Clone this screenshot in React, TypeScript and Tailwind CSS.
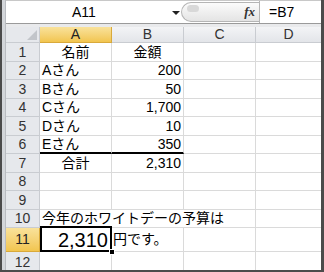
import React from "react";

type Row = {
  n: number;
  h: number;
  a?: string;
  aAlign?: "left" | "center" | "right";
  b?: string;
  bAlign?: "left" | "center" | "right";
};

const rows: Row[] = [
  { n: 1, h: 19, a: "名前", aAlign: "center", b: "金額", bAlign: "center" },
  { n: 2, h: 18, a: "Aさん", b: "200", bAlign: "right" },
  { n: 3, h: 19, a: "Bさん", b: "50", bAlign: "right" },
  { n: 4, h: 18, a: "Cさん", b: "1,700", bAlign: "right" },
  { n: 5, h: 19, a: "Dさん", b: "10", bAlign: "right" },
  { n: 6, h: 18, a: "Eさん", b: "350", bAlign: "right" },
  { n: 7, h: 19, a: "合計", aAlign: "center", b: "2,310", bAlign: "right" },
  { n: 8, h: 18 },
  { n: 9, h: 19 },
];

const font = { fontFamily: '"Liberation Sans", "Noto Sans CJK JP", sans-serif' };

function alignCls(a?: string) {
  if (a === "center") return "justify-center";
  if (a === "right") return "justify-end pr-[2px]";
  return "justify-start pl-[2px]";
}

function RowHeader({ n, sel }: { n: number; sel?: boolean }) {
  return (
    <div
      className={
        "w-[34px] shrink-0 flex items-center justify-center border-b border-r text-[14px] " +
        (sel
          ? "bg-gradient-to-b from-[#f9e29a] to-[#f2c54e] border-[#d9a93a] text-[#222]"
          : "bg-[#e6e8ec] border-[#c9ccd1] text-[#333]")
      }
    >
      {n}
    </div>
  );
}

export default function App() {
  return (
    <div
      className="w-[324px] h-[272px] bg-white overflow-hidden flex border-l-2 border-r-[3px] border-b-2 border-[#4b4b4b]"
      style={font}
    >
      <div className="w-[4px] shrink-0 bg-[#d3d6da] border-r border-[#b9bcc1]" />
      <div className="flex-1 flex flex-col min-w-0">
        {/* formula bar */}
        <div className="h-[23px] shrink-0 flex border-t border-[#c8c8c8] bg-white">
          <div className="w-[175px] shrink-0 flex items-center relative">
            <span className="pl-[66px] text-[14px] text-black">A11</span>
            <div className="absolute left-[166px] top-[10px] w-0 h-0 border-l-[4px] border-r-[4px] border-t-[4px] border-l-transparent border-r-transparent border-t-[#222]" />
          </div>
          <div className="w-[78px] shrink-0 my-[1px] rounded-l-full border border-r-0 border-[#b5b5b5] bg-gradient-to-b from-[#fbfbfb] to-[#e4e4e4] flex items-center relative">
            <div className="absolute left-[5px] top-[2px] w-[12px] h-[7px] rounded-full bg-[#d8d8d8]" />
            <span
              className="ml-auto mr-[4px] text-[13px] italic font-bold text-[#333]"
              style={{ fontFamily: '"Liberation Serif", serif' }}
            >
              fx
            </span>
          </div>
          <div className="flex-1 border-l border-[#b5b5b5] flex items-center pl-[9px] text-[14px] text-black">
            =B7
          </div>
        </div>
        {/* separator */}
        <div className="h-[1px] bg-[#9a9a9a] shrink-0" />
        <div className="h-[3px] bg-[#e9eaec] shrink-0" />
        {/* column header */}
        <div className="h-[16px] shrink-0 flex text-[14px] text-[#333]">
          <div className="w-[34px] shrink-0 bg-[#e6e8ec] border-r border-b border-[#c9ccd1] relative">
            <div className="absolute right-[2px] bottom-[2px] w-0 h-0 border-l-[10px] border-t-[10px] border-l-transparent border-t-transparent border-b-0 border-r-0" />
            <svg className="absolute right-[2px] bottom-[2px]" width="10" height="10" viewBox="0 0 10 10">
              <polygon points="10,0 10,10 0,10" fill="#c2c5ca" />
            </svg>
          </div>
          <div className="w-[72px] shrink-0 flex items-center justify-center bg-gradient-to-b from-[#f9e29a] to-[#f2c54e] border-r border-b border-[#d9a93a] text-[#222]">
            A
          </div>
          <div className="w-[72px] shrink-0 flex items-center justify-center bg-gradient-to-b from-[#f3f4f6] to-[#e3e5e9] border-r border-b border-[#c9ccd1]">
            B
          </div>
          <div className="w-[72px] shrink-0 flex items-center justify-center bg-gradient-to-b from-[#f3f4f6] to-[#e3e5e9] border-r border-b border-[#c9ccd1]">
            C
          </div>
          <div className="flex-1 flex items-center justify-center bg-gradient-to-b from-[#f3f4f6] to-[#e3e5e9] border-b border-[#c9ccd1]">
            D
          </div>
        </div>
        {/* rows */}
        {rows.map((r) => (
          <div key={r.n} className="flex shrink-0 text-[14px] text-black" style={{ height: r.h }}>
            <RowHeader n={r.n} />
            <div
              className={
                "w-[72px] shrink-0 flex items-center whitespace-nowrap border-r border-[#dadada] " +
                (r.n === 6 ? "border-b-2 border-b-black " : "border-b ") +
                alignCls(r.aAlign)
              }
            >
              {r.a}
            </div>
            <div
              className={
                "w-[72px] shrink-0 flex items-center whitespace-nowrap border-r border-[#dadada] " +
                (r.n === 6 ? "border-b-2 border-b-black " : "border-b ") +
                alignCls(r.bAlign)
              }
            >
              {r.b}
            </div>
            <div className="w-[72px] shrink-0 border-r border-b border-[#dadada]" />
            <div className="flex-1 border-b border-[#dadada]" />
          </div>
        ))}
        {/* row 10 */}
        <div className="flex shrink-0 h-[18px] text-[14px] text-black">
          <RowHeader n={10} />
          <div className="w-[72px] shrink-0 flex items-center border-b border-[#dadada] pl-[2px] overflow-visible whitespace-nowrap">
            今年のホワイトデーの予算は
          </div>
          <div className="w-[72px] shrink-0 border-b border-[#dadada]" />
          <div className="w-[72px] shrink-0 border-r border-b border-[#dadada]" />
          <div className="flex-1 border-b border-[#dadada]" />
        </div>
        {/* row 11 */}
        <div className="flex shrink-0 h-[24px] text-black">
          <RowHeader n={11} sel />
          <div className="w-[72px] shrink-0 relative flex items-center justify-end pr-[4px] text-[20px]">
            <div className="absolute left-0 top-[-2px] right-0 bottom-0 border-2 border-black" />
            <div className="absolute right-[-3px] bottom-[-3px] w-[6px] h-[6px] bg-black border border-white" />
            2,310
          </div>
          <div className="w-[72px] shrink-0 flex items-center pl-[1px] text-[14px] border-r border-b border-[#dadada]">
            円です。
          </div>
          <div className="w-[72px] shrink-0 border-r border-b border-[#dadada]" />
          <div className="flex-1 border-b border-[#dadada]" />
        </div>
        {/* row 12 */}
        <div className="flex flex-1 text-[14px] text-black">
          <RowHeader n={12} />
          <div className="w-[72px] shrink-0 border-r border-[#dadada]" />
          <div className="w-[72px] shrink-0 border-r border-[#dadada]" />
          <div className="w-[72px] shrink-0 border-r border-[#dadada]" />
          <div className="flex-1" />
        </div>
      </div>
    </div>
  );
}
